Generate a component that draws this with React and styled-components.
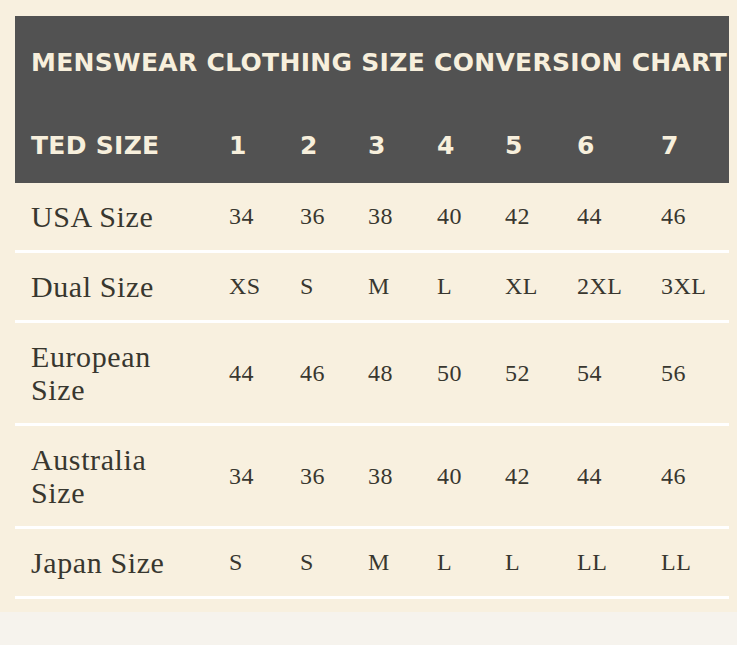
import styled, { createGlobalStyle } from "styled-components";

const GlobalStyle = createGlobalStyle`
  body {
    margin: 0;
    background: #f6f3ed;
  }
`;

const COLUMNS = "214px 71px 68px 69px 68px 72px 84px 68px";

const rows = [
  { label: ["USA Size"], values: ["34", "36", "38", "40", "42", "44", "46"] },
  { label: ["Dual Size"], values: ["XS", "S", "M", "L", "XL", "2XL", "3XL"] },
  { label: ["European", "Size"], values: ["44", "46", "48", "50", "52", "54", "56"] },
  { label: ["Australia", "Size"], values: ["34", "36", "38", "40", "42", "44", "46"] },
  { label: ["Japan Size"], values: ["S", "S", "M", "L", "L", "LL", "LL"] },
];

export default function App() {
  return (
    <>
      <GlobalStyle />
      <Page>
        <Chart>
          <Header>
            <Title>MENSWEAR CLOTHING SIZE CONVERSION CHART</Title>
            <HeadRow>
              <HeadCell>TED SIZE</HeadCell>
              {[1, 2, 3, 4, 5, 6, 7].map((n) => (
                <HeadCell key={n}>{n}</HeadCell>
              ))}
            </HeadRow>
          </Header>
          {rows.map((row) => (
            <Row key={row.label.join(" ")}>
              <Label>
                {row.label.map((line) => (
                  <span key={line}>{line}</span>
                ))}
              </Label>
              {row.values.map((v, i) => (
                <Value key={i}>{v}</Value>
              ))}
            </Row>
          ))}
        </Chart>
      </Page>
    </>
  );
}

const Page = styled.div`
  background: #f8f0df;
  padding: 16px 8px 13px 15px;
`;

const Chart = styled.div`
  width: 714px;
  display: flex;
  flex-direction: column;
`;

const Header = styled.div`
  background: #525252;
  color: #f7efdc;
  font-family: "DejaVu Sans", Verdana, sans-serif;
  font-weight: bold;
  padding: 32px 0 22px;
  letter-spacing: 0.3px;
`;

const Title = styled.div`
  padding-left: 16px;
  font-size: 25px;
  line-height: 30px;
  white-space: nowrap;
`;

const HeadRow = styled.div`
  display: grid;
  grid-template-columns: ${COLUMNS};
  margin-top: 53px;
`;

const HeadCell = styled.div`
  font-size: 25px;
  line-height: 30px;
  white-space: nowrap;
  &:first-child {
    padding-left: 16px;
  }
`;

const Row = styled.div`
  display: grid;
  grid-template-columns: ${COLUMNS};
  align-items: center;
  padding: 17px 0;
  border-bottom: 3px solid #ffffff;
  color: #38372f;
  font-family: "Liberation Serif", Georgia, serif;
`;

const Label = styled.div`
  display: flex;
  flex-direction: column;
  padding-left: 16px;
  font-size: 30px;
  line-height: 33px;
  letter-spacing: 0.6px;
`;

const Value = styled.div`
  font-size: 24px;
  line-height: 33px;
  white-space: nowrap;
  letter-spacing: 0.5px;
`;
